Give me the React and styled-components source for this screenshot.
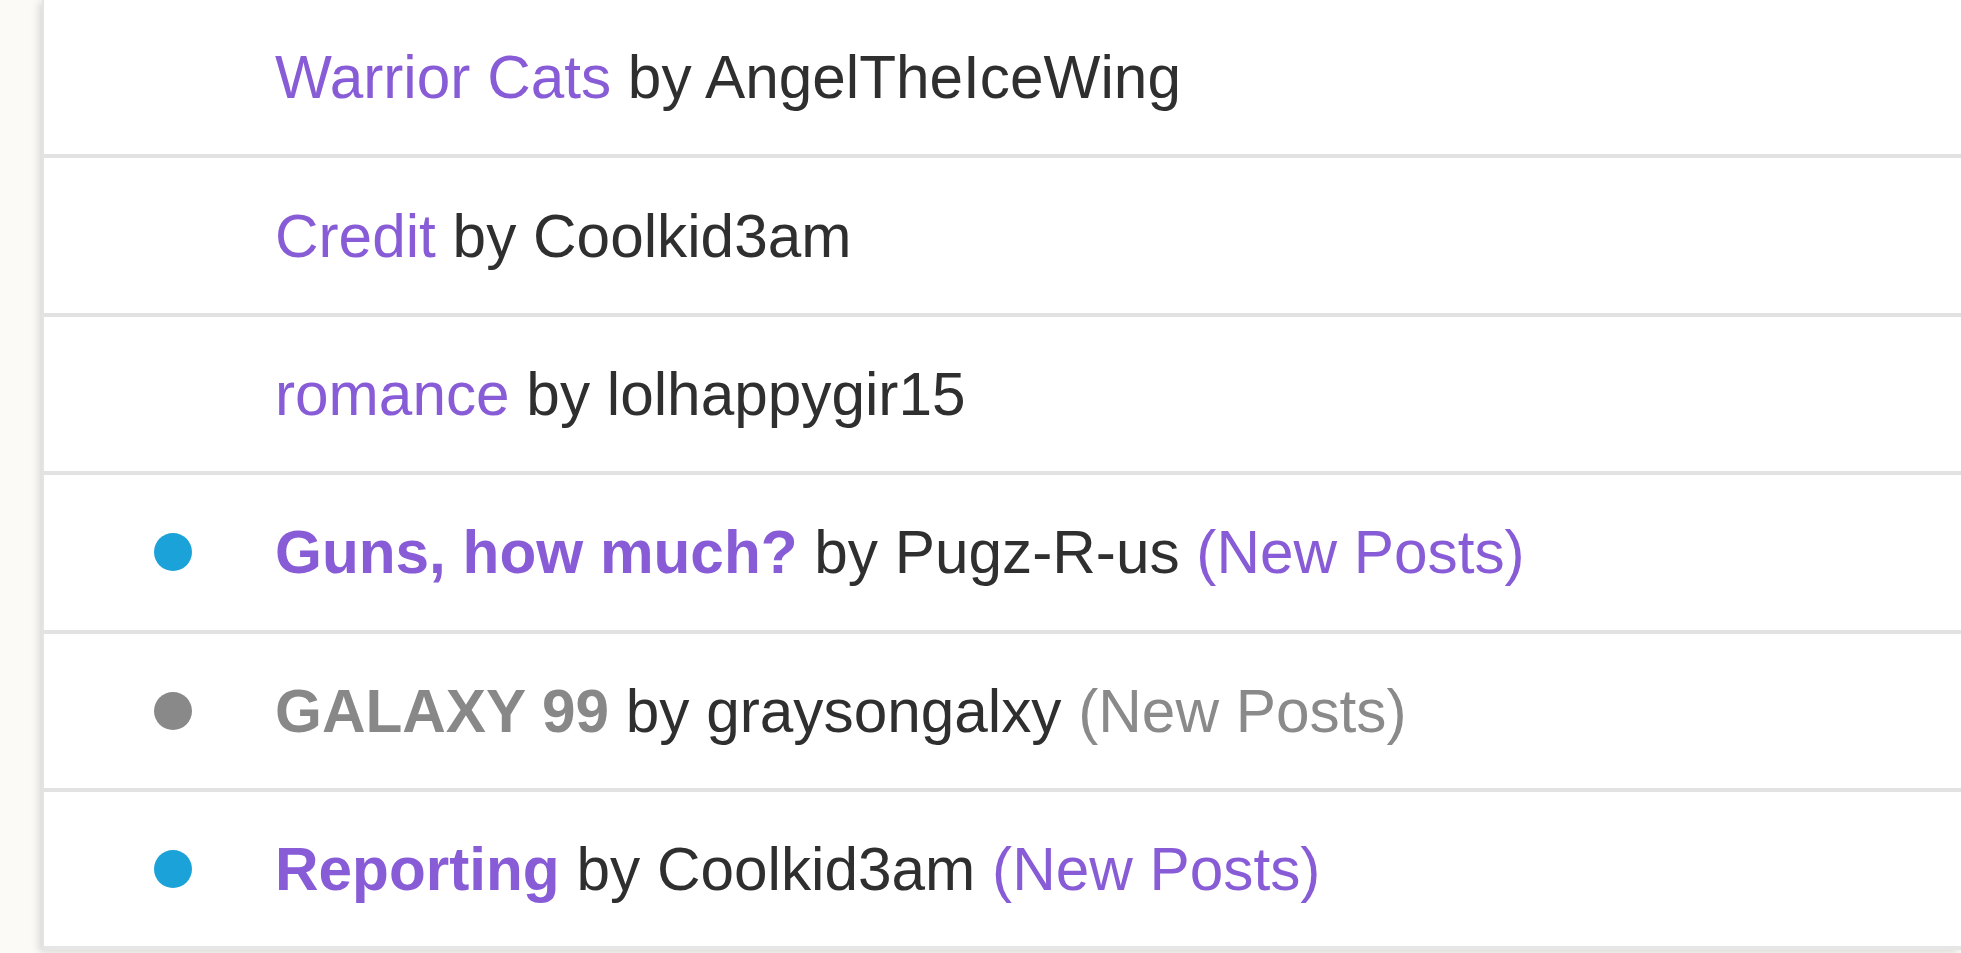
import React from 'react';
import styled, { createGlobalStyle } from 'styled-components';

const GlobalStyle = createGlobalStyle`
  html, body {
    margin: 0;
    padding: 0;
    background: #fbfaf6;
    overflow: hidden;
  }
`;

const Page = styled.div`
  width: 1961px;
  height: 953px;
  padding-left: 42px;
  box-sizing: border-box;
  background: #fbfaf6;
`;

const Panel = styled.div`
  background: #fff;
  border-left: 2px solid #e4e4e4;
  box-shadow: -3px 2px 8px rgba(0, 0, 0, 0.14);
  font-family: 'Liberation Sans', Arial, Helvetica, sans-serif;
  font-size: 60.3px;
`;

const Row = styled.div`
  height: 154.4px;
  display: flex;
  align-items: center;
  padding-left: 110px;
  border-bottom: 4px solid #e2e2e2;
  &:last-child {
    border-bottom-color: #e6e6e6;
  }
`;

const Marker = styled.span`
  flex: none;
  width: 38px;
  height: 38px;
  border-radius: 50%;
  margin-right: 83px;
  background: ${(p) =>
    p.tone === 'new' ? '#1ba2d9' : p.tone === 'seen' ? '#898989' : 'transparent'};
`;

const Title = styled.span`
  white-space: nowrap;
  color: #2f2f2f;
  .topic {
    color: ${(p) => (p.tone === 'seen' ? '#888' : '#885cd7')};
    font-weight: ${(p) => (p.tone ? 700 : 400)};
  }
  .flag {
    color: ${(p) => (p.tone === 'seen' ? '#8a8a8a' : '#885cd7')};
  }
`;

const topics = [
  { name: 'Warrior Cats', author: 'AngelTheIceWing' },
  { name: 'Credit', author: 'Coolkid3am' },
  { name: 'romance', author: 'lolhappygir15' },
  { name: 'Guns, how much?', author: 'Pugz-R-us', tone: 'new' },
  { name: 'GALAXY 99', author: 'graysongalxy', tone: 'seen' },
  { name: 'Reporting', author: 'Coolkid3am', tone: 'new' },
];

export default function App() {
  return (
    <>
      <GlobalStyle />
      <Page>
        <Panel>
          {topics.map((t, i) => (
            <Row key={i}>
              <Marker tone={t.tone} />
              <Title tone={t.tone}>
                <span className="topic">{t.name}</span> by {t.author}
                {t.tone && <span className="flag"> (New Posts)</span>}
              </Title>
            </Row>
          ))}
        </Panel>
      </Page>
    </>
  );
}
